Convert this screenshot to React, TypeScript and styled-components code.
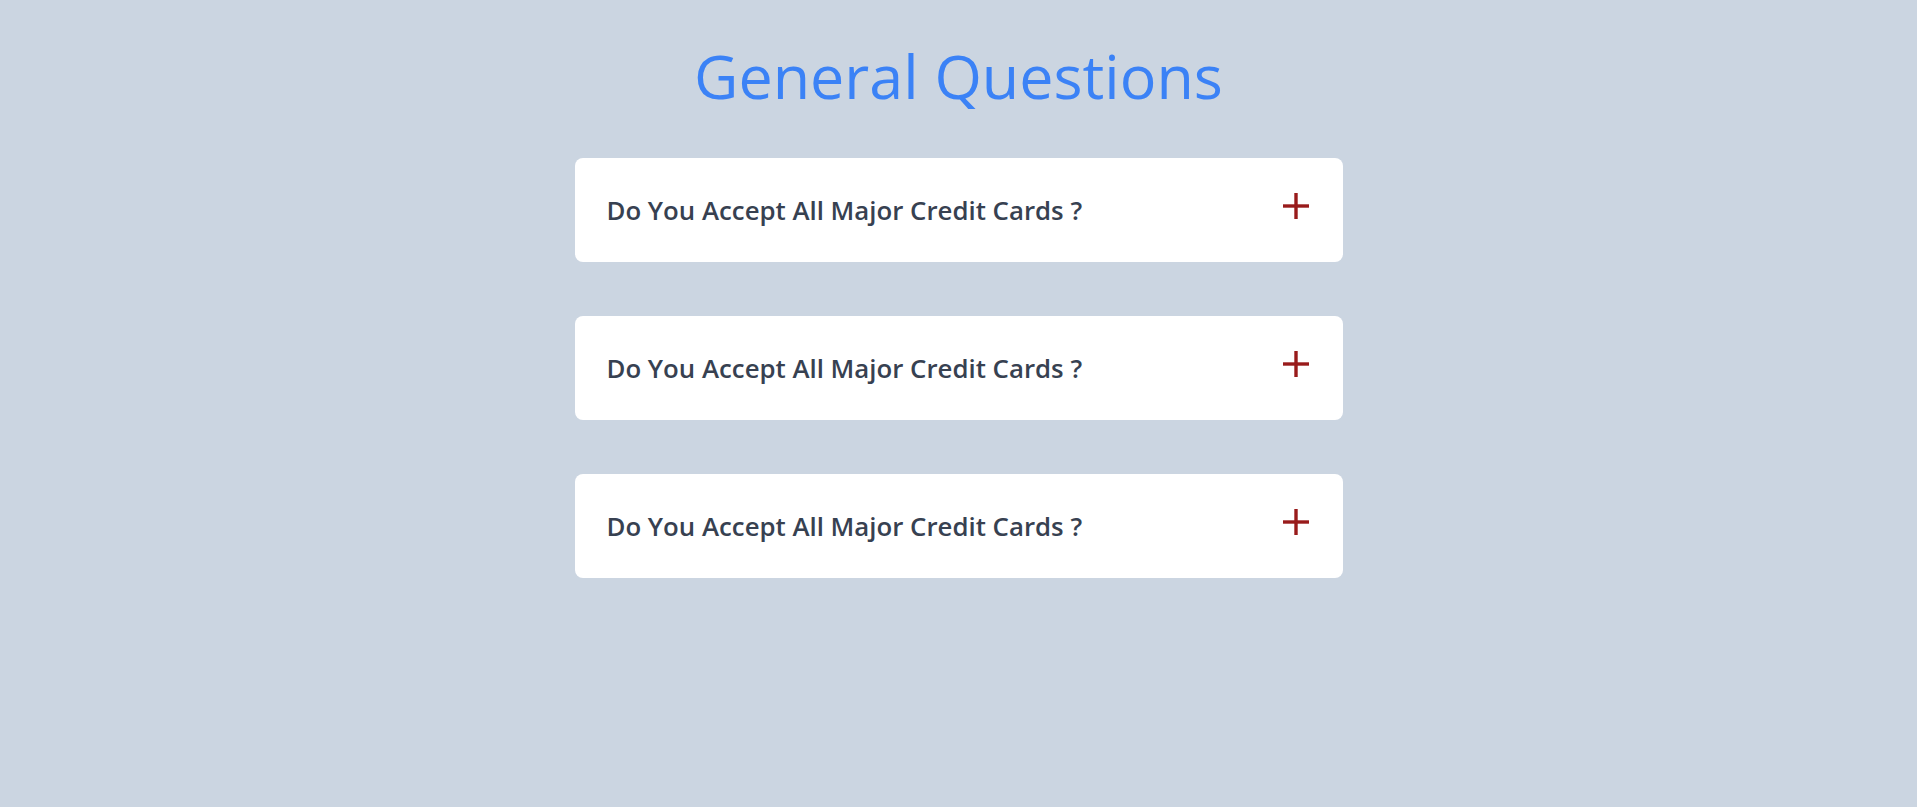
import { useState } from "react";
import styled, { createGlobalStyle } from "styled-components";


interface FaqItem {
    question: string;
    answer: string;
}


const faqs: FaqItem[] = [
    { question: "Do You Accept All Major Credit Cards ?", answer: "Yes, we accept Visa, MasterCard and American Express." },
    { question: "Do You Accept All Major Credit Cards ?", answer: "Yes, we accept Visa, MasterCard and American Express." },
    { question: "Do You Accept All Major Credit Cards ?", answer: "Yes, we accept Visa, MasterCard and American Express." },
];


function PlusIcon() {
    return (
        <Icon width="26" height="26" viewBox="0 0 26 26" aria-hidden="true">
            <line x1="13" y1="0" x2="13" y2="26" />
            <line x1="0" y1="13" x2="26" y2="13" />
        </Icon>
    );
}


export default function App() {
    // state
    const [openIndex, setOpenIndex] = useState<number | null>(null);

    // render
    return (
        <>
            <GlobalStyle />
            <Page>
                <Title>{"General Questions"}</Title>
                <List>
                    {faqs.map((faq, i) => (
                        <Card key={i} onClick={() => setOpenIndex(openIndex === i ? null : i)}>
                            <Header>
                                <Question>{faq.question}</Question>
                                <PlusIcon />
                            </Header>
                            {openIndex === i && <Answer>{faq.answer}</Answer>}
                        </Card>
                    ))}
                </List>
            </Page>
        </>
    );
}


const GlobalStyle = createGlobalStyle`
    html, body {
        margin: 0;
        padding: 0;
        background: #cbd5e1;
    }
    * {
        box-sizing: border-box;
    }
`;

const Page = styled.div`
    min-height: 100vh;
    padding-top: 39px;
    display: flex;
    flex-direction: column;
    align-items: center;
    background: #cbd5e1;
    font-family: "Open Sans", "Noto Sans", sans-serif;
`;

const Title = styled.h1`
    margin: 0 0 45px;
    font-size: 61px;
    line-height: 74px;
    font-weight: 400;
    color: #3b82f6;
    text-align: center;
`;

const List = styled.div`
    width: 768px;
    display: flex;
    flex-direction: column;
    gap: 54px;
`;

const Card = styled.div`
    background: #ffffff;
    border-radius: 8px;
    cursor: pointer;
`;

const Header = styled.div`
    height: 104px;
    padding: 0 34px 0 32px;
    display: flex;
    align-items: center;
    justify-content: space-between;
`;

const Question = styled.h3`
    margin: 0;
    font-size: 25.8px;
    line-height: 36px;
    font-weight: 600;
    color: #374151;
`;

const Icon = styled.svg`
    margin-bottom: 8px;
    stroke: #991b1b;
    stroke-width: 3.4;
    fill: none;
`;

const Answer = styled.p`
    margin: 0;
    padding: 0 34px 32px 32px;
    font-size: 18px;
    color: #475569;
`;
